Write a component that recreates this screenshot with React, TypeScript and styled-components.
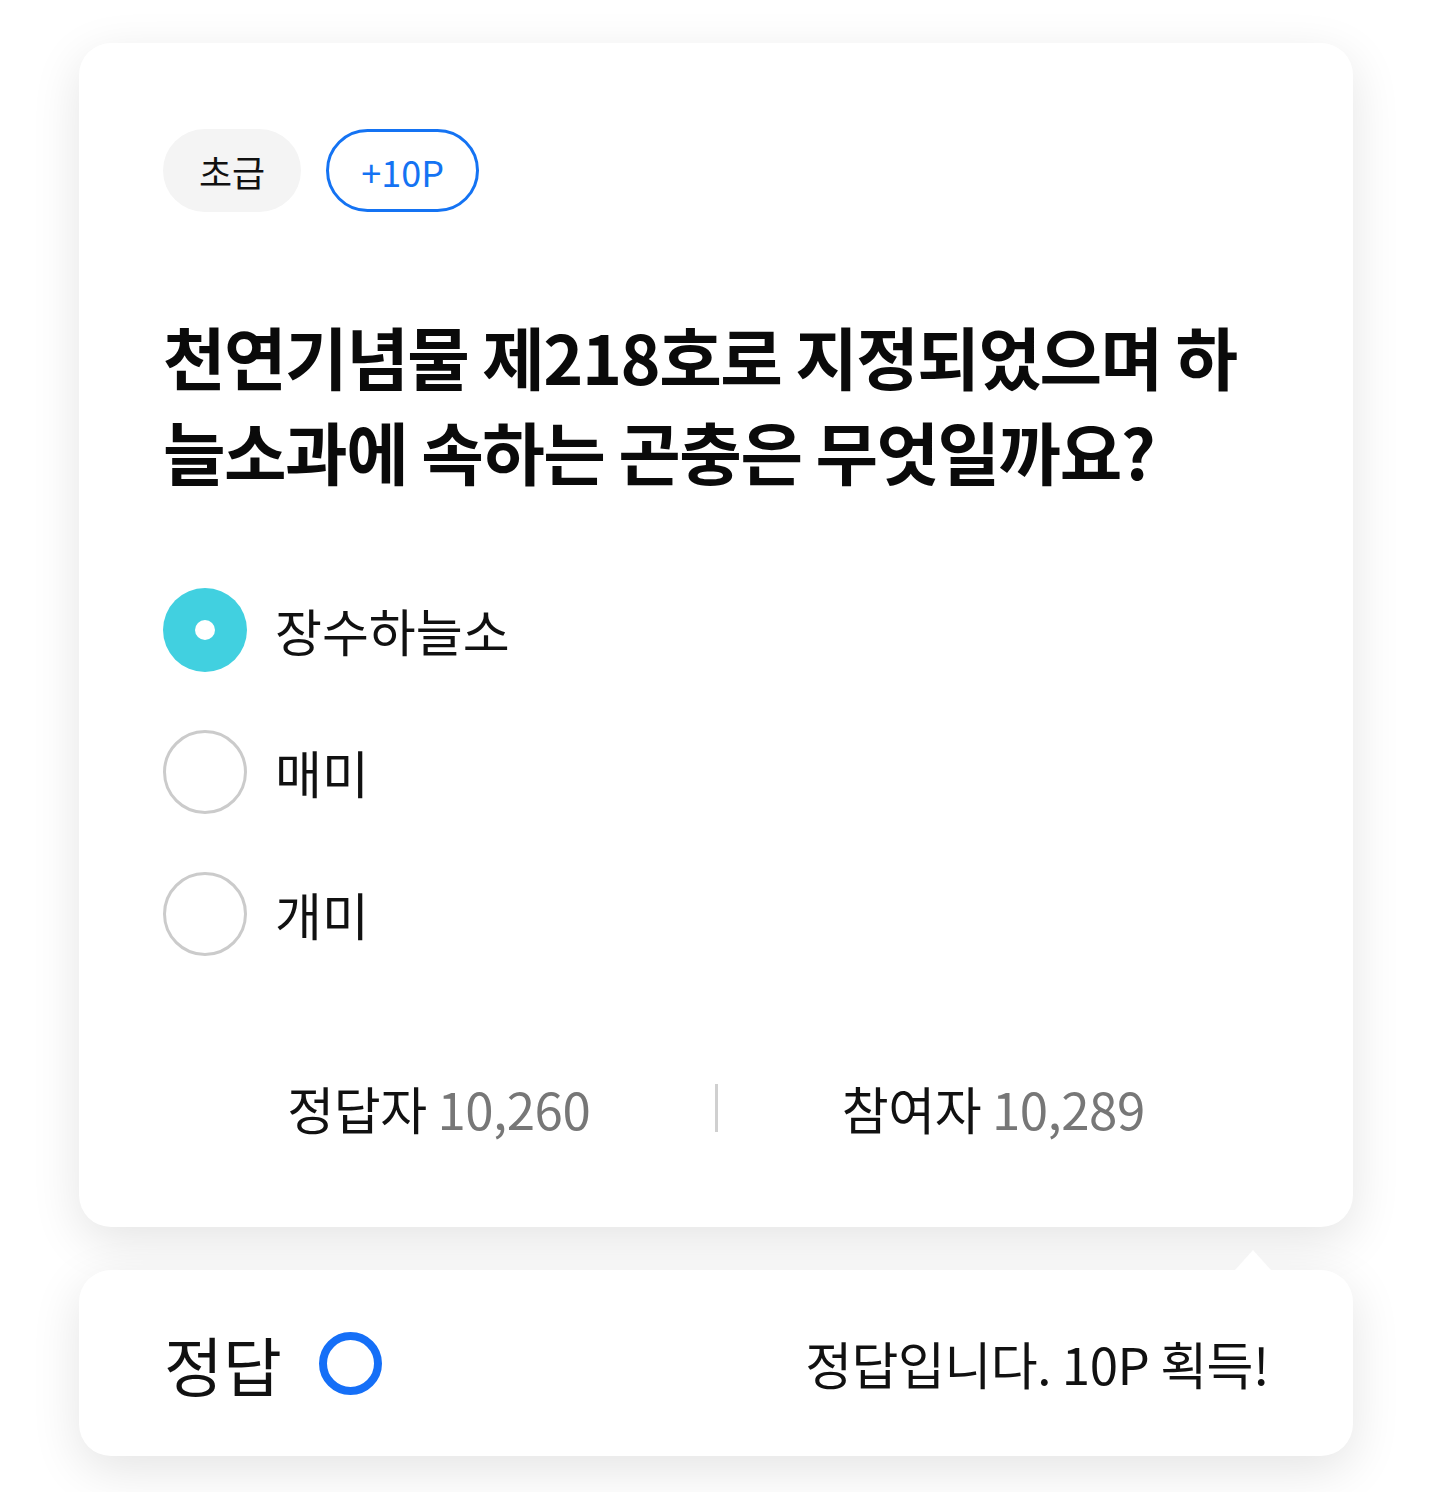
import React from "react";
import styled, { createGlobalStyle } from "styled-components";

const Global = createGlobalStyle`
  html, body { margin: 0; padding: 0; background: #ffffff; }
  body { font-family: "Noto Sans CJK KR", "Noto Sans", sans-serif; color: #111; }
  * { box-sizing: border-box; }
`;

const Page = styled.div`
  width: 1435px;
  min-height: 1492px;
  padding: 43px 82px 36px 79px;
  display: flex;
  flex-direction: column;
  gap: 43px;
`;

const Card = styled.section`
  background: #fff;
  border-radius: 32px;
  box-shadow: 0 14px 50px rgba(0, 0, 0, 0.11);
  padding: 86px 84px 82px 84px;
  display: flex;
  flex-direction: column;
`;

const Badges = styled.div`
  display: flex;
  gap: 25px;
`;

const Badge = styled.span<{ $outline?: boolean }>`
  height: 83px;
  padding: 0 ${(p) => (p.$outline ? "32px" : "36px")};
  border-radius: 42px;
  display: inline-flex;
  align-items: center;
  font-size: 36px;
  background: ${(p) => (p.$outline ? "#fff" : "#f4f4f4")};
  border: ${(p) => (p.$outline ? "3px solid #1473f3" : "none")};
  color: ${(p) => (p.$outline ? "#1473f3" : "#111")};
`;

const Title = styled.h2`
  margin: 96px 0 0 0;
  font-size: 68px;
  line-height: 95px;
  font-weight: 700;
  letter-spacing: -1.5px;
  color: #0a0a0a;
`;

const Options = styled.div`
  margin-top: 90px;
  display: flex;
  flex-direction: column;
  gap: 58px;
`;

const Option = styled.label`
  display: flex;
  align-items: center;
  gap: 28px;
  font-size: 51px;
  line-height: 74px;
  color: #111;
`;

const Radio = styled.span<{ $checked?: boolean }>`
  width: 84px;
  height: 84px;
  border-radius: 50%;
  flex: none;
  display: flex;
  align-items: center;
  justify-content: center;
  background: ${(p) => (p.$checked ? "#41d0e0" : "#fff")};
  border: ${(p) => (p.$checked ? "none" : "3px solid #cbcbcb")};
  &::after {
    content: "";
    display: ${(p) => (p.$checked ? "block" : "none")};
    width: 20px;
    height: 20px;
    border-radius: 50%;
    background: #fff;
  }
`;

const Stats = styled.div`
  margin-top: 115px;
  display: grid;
  grid-template-columns: 1fr 3px 1fr;
  align-items: center;
`;

const Stat = styled.div`
  text-align: center;
  font-size: 51px;
  line-height: 74px;
  color: #111;
  letter-spacing: -0.5px;
`;

const Num = styled.span`
  color: #777;
  font-weight: 400;
`;

const Divider = styled.span`
  width: 3px;
  height: 48px;
  background: #d0d0d0;
`;

const AnswerBox = styled.section`
  position: relative;
  background: #fff;
  border-radius: 32px;
  box-shadow: 0 14px 50px rgba(0, 0, 0, 0.11);
  height: 186px;
  padding: 0 84px 0 85px;
  display: flex;
  align-items: center;
  justify-content: space-between;
  &::before {
    content: "";
    position: absolute;
    top: -20px;
    right: 82px;
    width: 0;
    height: 0;
    border-left: 18px solid transparent;
    border-right: 18px solid transparent;
    border-bottom: 20px solid #fff;
  }
`;

const AnswerLabel = styled.div`
  display: flex;
  align-items: center;
  gap: 37px;
  font-size: 64px;
  color: #111;
`;

const Ring = styled.span`
  width: 63px;
  height: 63px;
  border-radius: 50%;
  border: 8px solid #156ff7;
`;

const AnswerText = styled.div`
  font-size: 51px;
  color: #111;
  letter-spacing: -0.5px;
`;

export default function App() {
  return (
    <>
      <Global />
      <Page>
        <Card>
          <Badges>
            <Badge>초급</Badge>
            <Badge $outline>+10P</Badge>
          </Badges>
          <Title>천연기념물 제218호로 지정되었으며 하늘소과에 속하는 곤충은 무엇일까요?</Title>
          <Options>
            <Option>
              <Radio $checked />
              장수하늘소
            </Option>
            <Option>
              <Radio />
              매미
            </Option>
            <Option>
              <Radio />
              개미
            </Option>
          </Options>
          <Stats>
            <Stat>
              정답자 <Num>10,260</Num>
            </Stat>
            <Divider />
            <Stat>
              참여자 <Num>10,289</Num>
            </Stat>
          </Stats>
        </Card>
        <AnswerBox>
          <AnswerLabel>
            정답
            <Ring />
          </AnswerLabel>
          <AnswerText>정답입니다. 10P 획득!</AnswerText>
        </AnswerBox>
      </Page>
    </>
  );
}
